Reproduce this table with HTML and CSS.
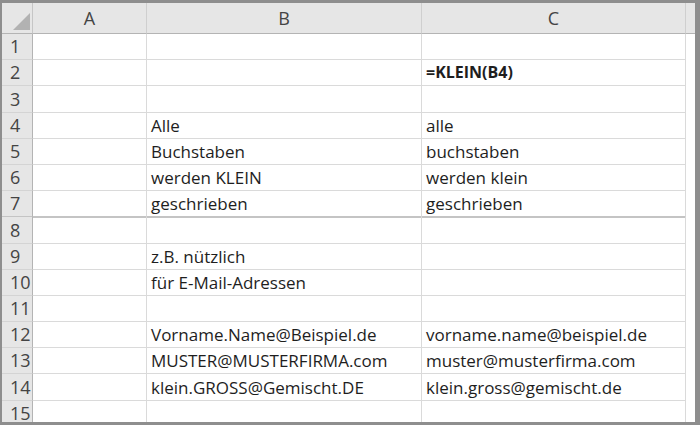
FILE: index.html
```html
<!DOCTYPE html>
<html lang="de">
<head>
  <meta charset="UTF-8" />
  <title>KLEIN</title>
  <link rel="stylesheet" href="styles.css">
</head>
<body>
  <div class="frame">
    <div class="row head">
      <div class="corner"><span class="tri"></span></div>
      <div class="col">A</div>
      <div class="col">B</div>
      <div class="col">C</div>
      <div class="col rest"></div>
    </div>

    <div class="row"><div class="num">1</div><div class="cell"></div><div class="cell"></div><div class="cell"></div><div class="cell rest"></div></div>
    <div class="row"><div class="num">2</div><div class="cell"></div><div class="cell"></div><div class="cell bold">=KLEIN(B4)</div><div class="cell rest"></div></div>
    <div class="row"><div class="num">3</div><div class="cell"></div><div class="cell"></div><div class="cell"></div><div class="cell rest"></div></div>
    <div class="row"><div class="num">4</div><div class="cell"></div><div class="cell">Alle</div><div class="cell">alle</div><div class="cell rest"></div></div>
    <div class="row"><div class="num">5</div><div class="cell"></div><div class="cell">Buchstaben</div><div class="cell">buchstaben</div><div class="cell rest"></div></div>
    <div class="row"><div class="num">6</div><div class="cell"></div><div class="cell">werden KLEIN</div><div class="cell">werden klein</div><div class="cell rest"></div></div>
    <div class="row split"><div class="num">7</div><div class="cell"></div><div class="cell">geschrieben</div><div class="cell">geschrieben</div><div class="cell rest"></div></div>
    <div class="row"><div class="num">8</div><div class="cell"></div><div class="cell"></div><div class="cell"></div><div class="cell rest"></div></div>
    <div class="row"><div class="num">9</div><div class="cell"></div><div class="cell">z.B. nützlich</div><div class="cell"></div><div class="cell rest"></div></div>
    <div class="row"><div class="num">10</div><div class="cell"></div><div class="cell">für E-Mail-Adressen</div><div class="cell"></div><div class="cell rest"></div></div>
    <div class="row"><div class="num">11</div><div class="cell"></div><div class="cell"></div><div class="cell"></div><div class="cell rest"></div></div>
    <div class="row"><div class="num">12</div><div class="cell"></div><div class="cell">Vorname.Name@Beispiel.de</div><div class="cell">vorname.name@beispiel.de</div><div class="cell rest"></div></div>
    <div class="row"><div class="num">13</div><div class="cell"></div><div class="cell">MUSTER@MUSTERFIRMA.com</div><div class="cell">muster@musterfirma.com</div><div class="cell rest"></div></div>
    <div class="row"><div class="num">14</div><div class="cell"></div><div class="cell">klein.GROSS@Gemischt.DE</div><div class="cell">klein.gross@gemischt.de</div><div class="cell rest"></div></div>
    <div class="row"><div class="num">15</div><div class="cell"></div><div class="cell"></div><div class="cell"></div><div class="cell rest"></div></div>
  </div>
</body>
</html>
```

FILE: styles.css
```css
body {
  margin: 0;
  background: #8e8e8e;
  font-family: "Open Sans", sans-serif;
  font-size: 17px;
  color: #1e1e1e;
}

.frame {
  margin: 3px 5px 0 2px;
  height: 419px;
  background: #fff;
  overflow: hidden;
}

.row {
  display: grid;
  grid-template-columns: 31px 114px 275px 264px 1fr;
  height: 26.2px;
}

.head {
  height: 31px;
  background: #e6e6e6;
  color: #444;
}

.corner {
  position: relative;
  border-right: 1px solid #c6c6c6;
  border-bottom: 1px solid #b4b4b4;
}

.tri {
  position: absolute;
  right: 2px;
  bottom: 3px;
  width: 0;
  height: 0;
  border-left: 17px solid transparent;
  border-bottom: 17px solid #b2b2b2;
}

.col {
  display: flex;
  align-items: center;
  justify-content: center;
  font-size: 18px;
  border-right: 1px solid #cfcfcf;
  border-bottom: 1px solid #b4b4b4;
}

.col.rest {
  border-right: none;
}

.num {
  display: flex;
  align-items: flex-end;
  padding: 0 0 1px 8px;
  background: #e6e6e6;
  color: #444;
  font-size: 18px;
  border-right: 1px solid #b4b4b4;
  border-bottom: 1px solid #d4d4d4;
}

.cell {
  display: flex;
  align-items: flex-end;
  padding: 0 0 1px 4px;
  white-space: nowrap;
  border-right: 1px solid #dadada;
  border-bottom: 1px solid #dadada;
}

.cell.rest {
  border-right: none;
  border-bottom: none;
}

.bold {
  font-weight: bold;
  font-size: 16px;
  padding-bottom: 2px;
}

.split .cell,
.split .num {
  border-bottom: 2px solid #c4c4c4;
}

.split .cell.rest {
  border-bottom: none;
}
```
